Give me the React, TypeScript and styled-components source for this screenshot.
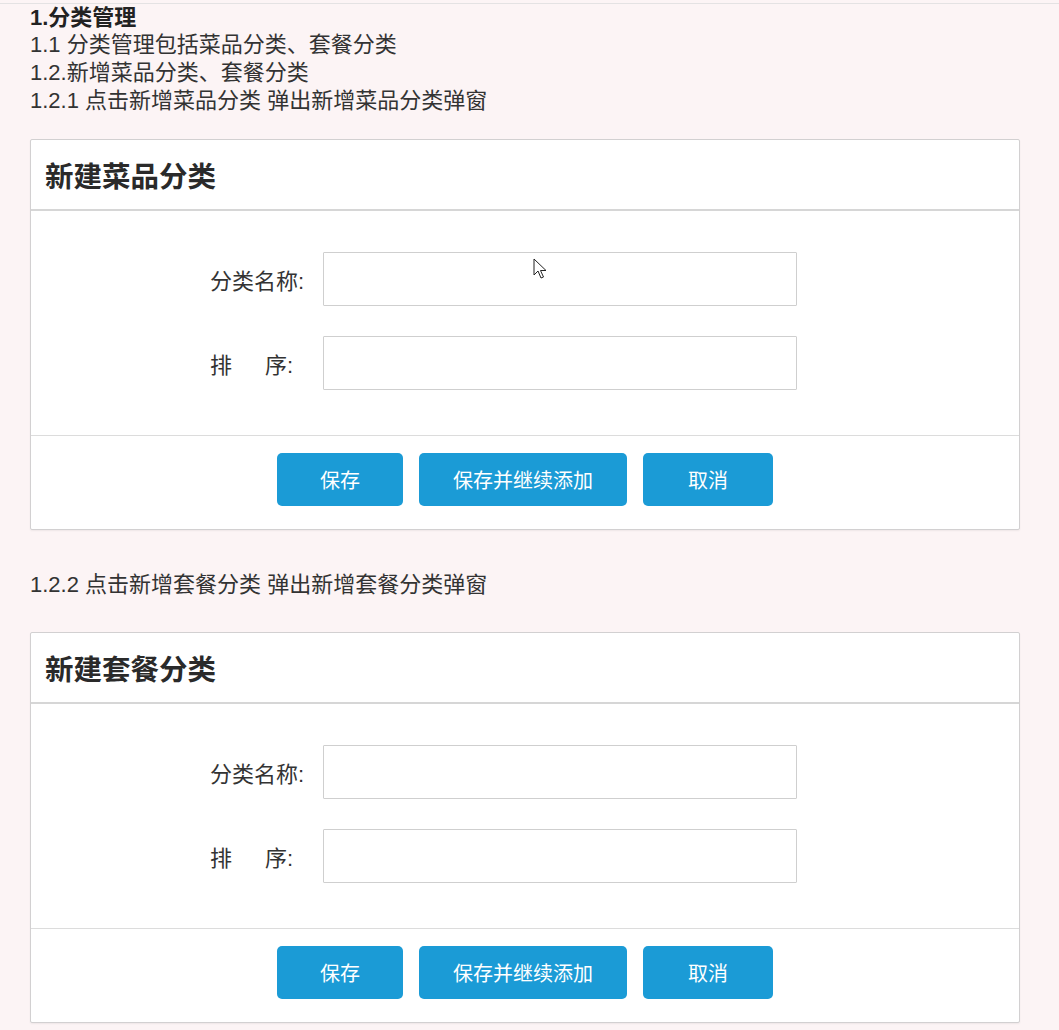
import React from 'react';
import styled, { createGlobalStyle } from 'styled-components';

const GlobalStyle = createGlobalStyle`
  body {
    margin: 0;
    background: #fcf4f5;
    font-family: "Liberation Sans", "Noto Sans CJK SC", sans-serif;
    color: #333;
  }
`;

const Page = styled.div`
  margin-top: 3px;
  border-top: 1px solid #e4e2e3;
  padding: 0 39px 20px 30px;
`;

const Heading = styled.div`
  font-size: 22px;
  line-height: 27px;
  font-weight: bold;
  color: #222;
`;

const Line = styled.div<{ $top?: number }>`
  font-size: 22px;
  line-height: 28px;
  color: #333;
  margin-top: ${p => p.$top || 0}px;
`;

const Card = styled.div<{ $top: number }>`
  margin-top: ${p => p.$top}px;
  width: 988px;
  background: #fff;
  border: 1px solid #d2d0d1;
  border-radius: 2px;
  box-shadow: 0 1px 2px rgba(0, 0, 0, 0.06);
`;

const CardHeader = styled.div`
  height: 69px;
  display: flex;
  align-items: center;
  padding-left: 14px;
  border-bottom: 2px solid #d6d6d6;
  font-size: 28.5px;
  font-weight: bold;
  color: #2a2a2a;
`;

const CardBody = styled.div`
  display: flex;
  flex-direction: column;
  gap: 30px;
  padding: 41px 0 45px 179px;
`;

const FormRow = styled.div`
  display: flex;
  align-items: center;
`;

const Label = styled.label`
  width: 113px;
  font-size: 22px;
  color: #333;
  white-space: nowrap;
`;

const LabelGap = styled.span`
  display: inline-block;
  width: 33px;
`;

const InputWrap = styled.div`
  position: relative;
`;

const Input = styled.input`
  box-sizing: border-box;
  width: 474px;
  height: 54px;
  border: 1px solid #cfcfcf;
  border-radius: 1px;
  background: #fff;
  outline: none;
  padding: 0 12px;
  font-size: 18px;
  font-family: inherit;
`;

const Cursor = styled.svg`
  position: absolute;
  left: 210px;
  top: 6px;
  pointer-events: none;
`;

const CardFooter = styled.div`
  display: flex;
  justify-content: center;
  gap: 16px;
  padding: 17px 0 23px;
  border-top: 1px solid #dcdcdc;
`;

const Button = styled.button<{ $w: number }>`
  width: ${p => p.$w}px;
  height: 53px;
  border: none;
  border-radius: 5px;
  background: #1b9bd6;
  color: #fff;
  font-size: 20px;
  font-family: inherit;
  cursor: pointer;
`;

type DialogProps = {
  title: string;
  top: number;
  showCursor?: boolean;
};

const Dialog: React.FC<DialogProps> = ({ title, top, showCursor }) => (
  <Card $top={top}>
    <CardHeader>{title}</CardHeader>
    <CardBody>
      <FormRow>
        <Label>分类名称:</Label>
        <InputWrap>
          <Input />
          {showCursor && (
            <Cursor width="14" height="22" viewBox="0 0 14 22">
              <path d="M1 1 L1 17 L5 13 L8 20 L10.5 19 L7.5 12.5 L13 12.5 Z" fill="#fff" stroke="#222" strokeWidth="1" strokeLinejoin="round" />
            </Cursor>
          )}
        </InputWrap>
      </FormRow>
      <FormRow>
        <Label>排<LabelGap />序:</Label>
        <InputWrap>
          <Input />
        </InputWrap>
      </FormRow>
    </CardBody>
    <CardFooter>
      <Button $w={126}>保存</Button>
      <Button $w={208}>保存并继续添加</Button>
      <Button $w={130}>取消</Button>
    </CardFooter>
  </Card>
);

export default function App() {
  return (
    <Page>
      <GlobalStyle />
      <Heading>1.分类管理</Heading>
      <Line>1.1 分类管理包括菜品分类、套餐分类</Line>
      <Line>1.2.新增菜品分类、套餐分类</Line>
      <Line>1.2.1 点击新增菜品分类 弹出新增菜品分类弹窗</Line>
      <Dialog title="新建菜品分类" top={24} showCursor />
      <Line $top={41}>1.2.2 点击新增套餐分类 弹出新增套餐分类弹窗</Line>
      <Dialog title="新建套餐分类" top={33} />
    </Page>
  );
}
